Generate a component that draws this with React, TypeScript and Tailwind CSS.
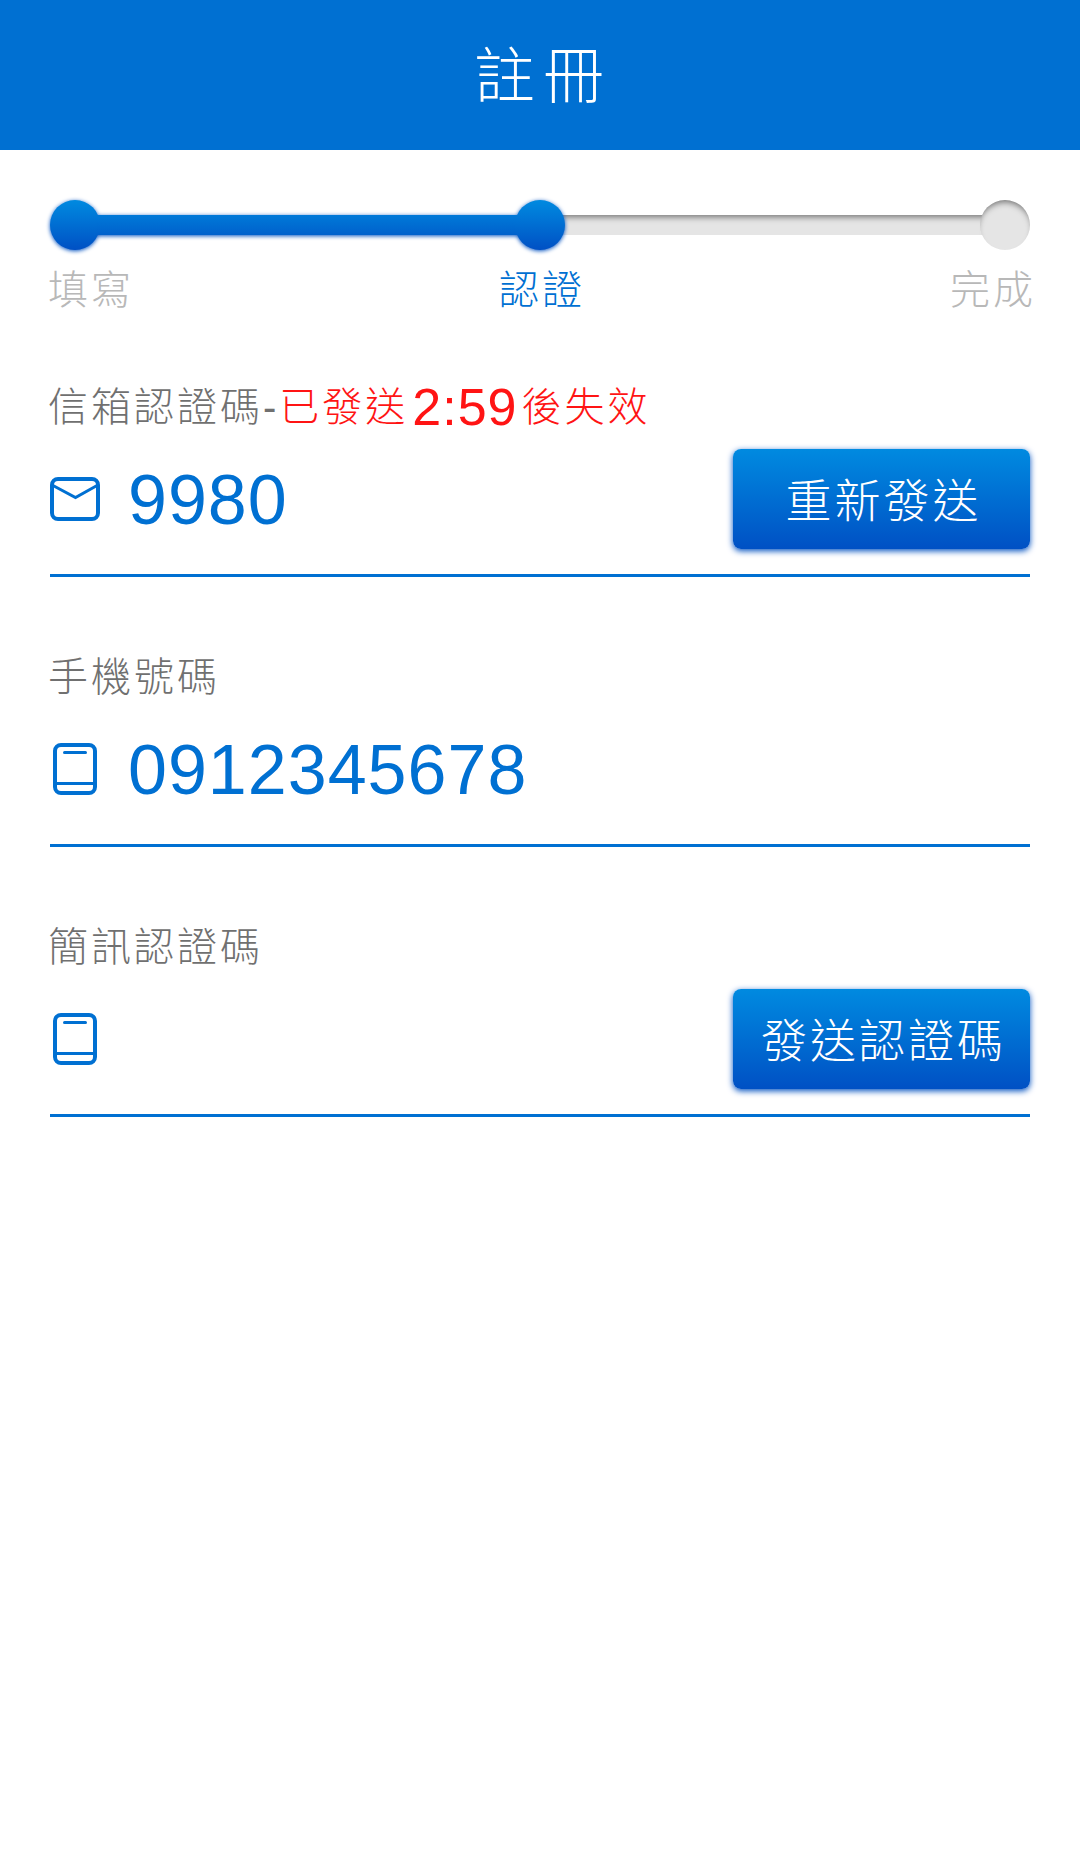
import type { ReactNode } from 'react';

function MailIcon() {
  return (
    <svg viewBox="0 0 50 44" className="h-11 w-[50px] shrink-0" fill="none" stroke="#0070d2" aria-hidden="true">
      <rect x="2" y="2" width="46" height="40" rx="6" strokeWidth="4" />
      <path d="M2.500 8.200 25.500 20.500 47.500 8.200" strokeWidth="3" />
    </svg>
  );
}

function PhoneIcon() {
  return (
    <svg viewBox="0 0 50 52" className="h-[52px] w-[50px] shrink-0" fill="none" stroke="#0070d2" aria-hidden="true">
      <rect x="5" y="2" width="40" height="48" rx="6" strokeWidth="4" />
      <path d="M5 40.500H45" strokeWidth="3" />
      <path d="M14.500 9.500H35.500" strokeWidth="3" strokeLinecap="round" />
    </svg>
  );
}

type FieldProps = {
  id: string;
  label: ReactNode;
  icon: ReactNode;
  value?: string;
  button?: string;
};

function Field({ id, label, icon, value, button }: FieldProps) {
  return (
    <div className="border-b-3 border-[#0070d2] pb-[25px]">
      <label
        htmlFor={id}
        className="-ml-0.5 flex h-[73px] items-center pb-3 text-[40px] leading-none font-light tracking-[3px] whitespace-nowrap text-[#707070]"
      >
        {label}
      </label>
      <div className="flex h-[100px] items-center">
        {icon}
        <input
          id={id}
          type="text"
          inputMode="numeric"
          defaultValue={value}
          className="ml-7 h-20 min-w-0 flex-1 bg-transparent pt-0.5 text-[70px] leading-none tracking-[1px] text-[#0070d2] outline-none"
        />
        {button && (
          <button
            type="button"
            className="h-full w-[297px] shrink-0 rounded-lg bg-linear-to-b from-[#008ae0] to-[#0050c4] pt-1 pl-1 text-[46px] leading-none font-light tracking-[3px] text-white shadow-[0_2px_6px_#0050c0]"
          >
            {button}
          </button>
        )}
      </div>
    </div>
  );
}

function DoneDot() {
  return <span className="size-[50px] shrink-0 rounded-full bg-linear-to-b from-[#008ae0] to-[#0050c4]" />;
}

function Stepper() {
  return (
    <div>
      <div className="flex" aria-hidden="true">
        <div className="relative z-10 flex grow basis-[100px] items-center drop-shadow-[0_1px_2px_#0050c0]">
          <DoneDot />
          <span className="-mx-1 h-5 flex-1 bg-linear-to-b from-[#0079d8] to-[#0061cc]" />
          <DoneDot />
        </div>
        <div className="flex grow basis-[50px] items-center">
          <span className="-mx-1 h-5 flex-1 bg-[#e5e5e5] shadow-[inset_0_5px_6px_-3px_#00000080]" />
          <span className="relative size-[50px] shrink-0 rounded-full bg-[#e5e5e5] shadow-[inset_0_5px_6px_-3px_#00000080]" />
        </div>
      </div>
      <ol className="-mr-1.5 -ml-0.5 flex h-20 items-center justify-between text-[40px] font-light tracking-[3px] text-[#b8b8b8]">
        <li>填寫</li>
        <li aria-current="step" className="text-[#0070d2]">認證</li>
        <li>完成</li>
      </ol>
    </div>
  );
}

export default function App() {
  return (
    <main className="min-h-screen bg-white font-['Liberation_Sans','Noto_Sans_CJK_TC',sans-serif]">
      <header className="flex h-[150px] items-center justify-center bg-[#0070d2]">
        <h1 className="pt-1 pl-1.5 text-[61px] leading-none font-light tracking-[8px] text-white">註冊</h1>
      </header>
      <div className="px-[50px] pt-[50px]">
        <Stepper />
        <form className="mt-[46px] flex flex-col gap-[69px]">
          <Field
            id="mail-code"
            label={
              <>
                <span>信箱認證碼-</span>
                <span className="flex items-center text-[#ff1414]">
                  <span>已發送</span>
                  <span className="mx-1 text-[52px] leading-none tracking-[1px]">2:59</span>
                  <span>後失效</span>
                </span>
              </>
            }
            icon={<MailIcon />}
            value="9980"
            button="重新發送"
          />
          <Field id="phone" label="手機號碼" icon={<PhoneIcon />} value="0912345678" />
          <Field id="sms-code" label="簡訊認證碼" icon={<PhoneIcon />} button="發送認證碼" />
        </form>
      </div>
    </main>
  );
}
